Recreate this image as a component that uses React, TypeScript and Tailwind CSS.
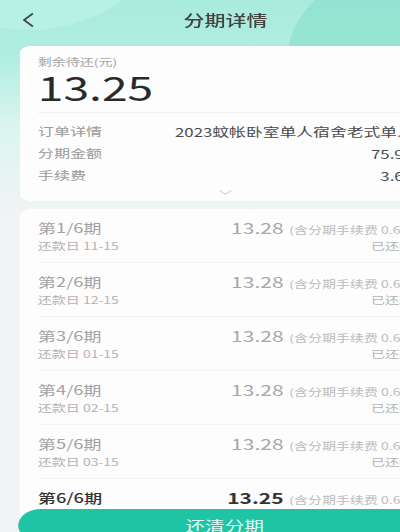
import React from 'react';

type Period = {
  no: number;
  date: string;
  amount: string;
  fee: string;
  status: string;
  paid: boolean;
};

const periods: Period[] = [
  { no: 1, date: '11-15', amount: '13.28', fee: '0.61', status: '已还款', paid: true },
  { no: 2, date: '12-15', amount: '13.28', fee: '0.61', status: '已还款', paid: true },
  { no: 3, date: '01-15', amount: '13.28', fee: '0.61', status: '已还款', paid: true },
  { no: 4, date: '02-15', amount: '13.28', fee: '0.61', status: '已还款', paid: true },
  { no: 5, date: '03-15', amount: '13.28', fee: '0.61', status: '已还款', paid: true },
  { no: 6, date: '04-15', amount: '13.25', fee: '0.61', status: '待还款', paid: false },
];

const details = [
  { label: '订单详情', value: '2023蚊帐卧室单人宿舍老式单人床上下铺' },
  { label: '分期金额', value: '75.99' },
  { label: '手续费', value: '3.66' },
];

const App: React.FC = () => {
  return (
    <div className="relative w-[400px] h-[532px] overflow-hidden bg-[linear-gradient(180deg,#a8ebdd_0px,#b2eee1_60px,#dcf5ef_130px,#f1f3f4_215px)] font-['Noto_Sans_CJK_SC',sans-serif]">
      {/* the screen is drawn stretched sideways, so lay out narrow and widen */}
      <div className="relative w-[322px] h-[532px] origin-top-left scale-x-[1.4]">
        <div className="absolute -left-[70px] -top-[150px] w-[180px] h-[180px] rounded-full bg-[#b7f0e4]" />
        <div className="absolute left-[205px] -top-[40px] w-[200px] h-[200px] rounded-full bg-[linear-gradient(180deg,#92e3d1,#9de7d7)]" />

        {/* Header */}
        <div className="relative grid h-[40px] grid-cols-[40px_1fr_40px] items-center">
          <button className="flex h-full items-center pl-[16px]">
            <svg width="8" height="14" viewBox="0 0 8 14" fill="none">
              <path d="M7 1 L1.2 7 L7 13" stroke="#444" strokeWidth="1.7" strokeLinecap="round" strokeLinejoin="round" />
            </svg>
          </button>
          <h1 className="text-center text-[15px] font-medium text-[#444]">分期详情</h1>
          <div />
        </div>

        {/* Summary card */}
        <div className="relative mx-[14px] mt-[6px] rounded-[8px] bg-[#fdfdfd] px-[13px] pt-[9px] pb-[6px]">
          <p className="text-[10px] leading-[14px] text-[#a5a5a5]">剩余待还(元)</p>
          <p className="text-[33px] leading-[36px] text-[#2a2a2a]">13.25</p>
          <div className="mt-[7px] h-px bg-[#f1f1f1]" />
          <div className="pt-[8px]">
            {details.map((d) => (
              <div key={d.label} className="flex items-center h-[22px]">
                <span className="w-[98px] shrink-0 text-[11.5px] text-[#9a9a9a]">{d.label}</span>
                <span className="min-w-0 flex-1 overflow-hidden whitespace-nowrap text-right text-[12px] text-[#4a4a4a]">{d.value}</span>
              </div>
            ))}
          </div>
          <div className="mt-[3px] flex justify-center">
            <svg width="10" height="5" viewBox="0 0 10 5" fill="none">
              <path d="M1 0.8 L5 4.2 L9 0.8" stroke="#d2d2d2" strokeWidth="1" strokeLinecap="round" />
            </svg>
          </div>
        </div>

        {/* Periods */}
        <div className="relative mx-[14px] mt-[8px] rounded-[8px] bg-[#fdfdfd] px-[13px]">
          {periods.map((p, i) => (
            <div
              key={p.no}
              className={`flex justify-between pt-[10px] pb-[9px] ${i < periods.length - 1 ? 'border-b border-[#f3f3f3]' : ''}`}
            >
              <div>
                <p className={`text-[13px] leading-[18px] ${p.paid ? 'text-[#a3a3a3]' : 'font-medium text-[#333]'}`}>
                  第{p.no}/6期
                </p>
                <p className="mt-[2px] text-[10px] leading-[14px] text-[#b3b3b3]">还款日 {p.date}</p>
              </div>
              <div className="flex flex-col items-end">
                <div className="flex items-baseline">
                  <span className={`text-[15px] leading-[18px] ${p.paid ? 'text-[#a8a8a8]' : 'font-semibold text-[#333]'}`}>
                    {p.amount}
                  </span>
                  <span className="ml-[4px] text-[10px] text-[#bcbcbc]">(含分期手续费 {p.fee})</span>
                </div>
                <p className="mt-[2px] text-[10px] leading-[14px] text-[#b3b3b3]">{p.status}</p>
              </div>
            </div>
          ))}
        </div>

        {/* Bottom action */}
        <button className="absolute left-[13px] right-[14px] top-[509px] h-[33px] rounded-full bg-[#1ec4a4] text-[14px] text-white/90">
          还清分期
        </button>
      </div>
    </div>
  );
};

export default App;
